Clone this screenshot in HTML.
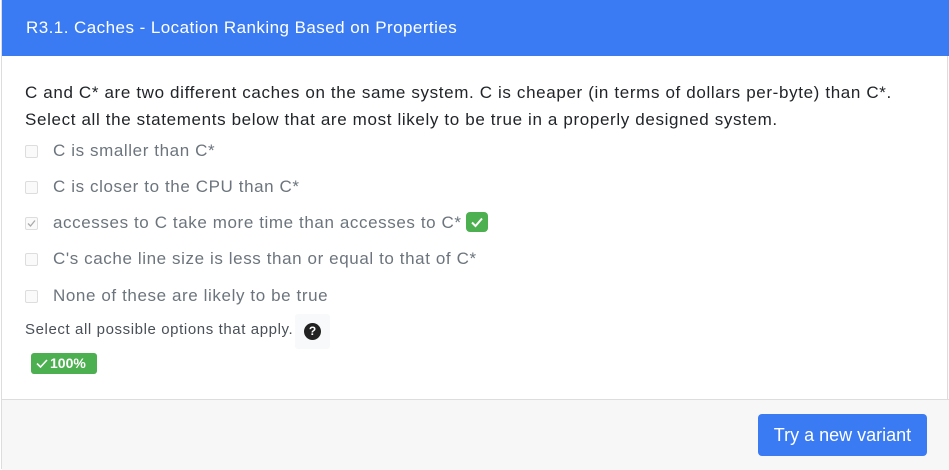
<!DOCTYPE html>
<html><head><style>
body{margin:0;width:949px;height:469px;overflow:hidden;font-family:"Liberation Sans",sans-serif;background:#fff;}
.card{position:absolute;left:1px;top:0;width:947px;height:469px;border:1px solid #ddd;border-top:none;box-sizing:border-box;}
.hdr{position:absolute;left:0;top:0;width:947px;height:56px;background:#3a7bf4;color:#fff;font-size:17px;line-height:56px;padding-left:24px;box-sizing:border-box;letter-spacing:0.45px}
.q{position:absolute;left:23px;top:79px;font-size:17px;line-height:27px;color:#212529;letter-spacing:0.64px;white-space:nowrap}
.opt{position:absolute;left:23px;font-size:17px;color:#6c757d;height:20px;line-height:20px;letter-spacing:0.6px}
.cb{position:absolute;left:0;top:4px;width:11px;height:11px;border:1px solid #ddd;border-radius:2px;background:#fafafa;}
.opt span.t{position:absolute;left:28px;white-space:nowrap;}
.ok{display:inline-block;width:22px;height:20px;background:#4caf50;border-radius:4px;vertical-align:top;margin-left:4px;position:relative;top:-1px}
.small{position:absolute;left:23px;top:320px;font-size:15px;color:#495057;line-height:20px;letter-spacing:0.6px;white-space:nowrap}
.help{position:absolute;left:293px;top:314px;width:35px;height:35px;background:#f8f9fa;border-radius:3px}
.help div{position:absolute;left:9px;top:9px;width:17px;height:17px;border-radius:50%;background:#222;color:#fff;font-size:12px;font-weight:bold;text-align:center;line-height:17px}
.badge{position:absolute;left:29px;top:353px;width:66px;height:21px;background:#4caf50;border-radius:3px;color:#fff;font-size:14px;font-weight:bold;line-height:21px}
.foot{position:absolute;left:0;top:399px;width:947px;height:70px;background:#f7f7f7;border-top:1px solid #ddd;}
.btn{position:absolute;left:756px;top:14px;width:169px;height:42px;background:#3a7bf4;border-radius:4px;color:#fff;font-size:18px;text-align:center;line-height:42px}
</style></head><body>
<div class="card">
<div class="hdr">R3.1. Caches - Location Ranking Based on Properties</div>
<div class="q">C and C* are two different caches on the same system. C is cheaper (in terms of dollars per-byte) than C*.<br>Select all the statements below that are most likely to be true in a properly designed system.</div>
<div class="opt" style="top:141px"><div class="cb"></div><span class="t">C is smaller than C*</span></div>
<div class="opt" style="top:177px"><div class="cb"></div><span class="t">C is closer to the CPU than C*</span></div>
<div class="opt" style="top:213px"><div class="cb"><svg width="11" height="11" style="position:absolute;left:0;top:0"><path d="M2 5.5L4.5 8L9 2.5" stroke="#aaa" stroke-width="1.3" fill="none"/></svg></div><span class="t">accesses to C take more time than accesses to C*<span class="ok"><svg width="22" height="20"><path d="M6 10.5L9.5 14L16 6.5" stroke="#fff" stroke-width="2" fill="none"/></svg></span></span></div>
<div class="opt" style="top:249px"><div class="cb"></div><span class="t">C's cache line size is less than or equal to that of C*</span></div>
<div class="opt" style="top:286px"><div class="cb"></div><span class="t">None of these are likely to be true</span></div>
<div class="small">Select all possible options that apply.</div>
<div class="help"><div>?</div></div>
<div class="badge"><svg width="14" height="21" style="position:absolute;left:4px;top:0"><path d="M2 10.5L5.5 14L12 7" stroke="#fff" stroke-width="1.6" fill="none"/></svg><span style="position:absolute;left:19px">100%</span></div>
<div class="foot"><div class="btn">Try a new variant</div></div>
</div>
</body></html>
